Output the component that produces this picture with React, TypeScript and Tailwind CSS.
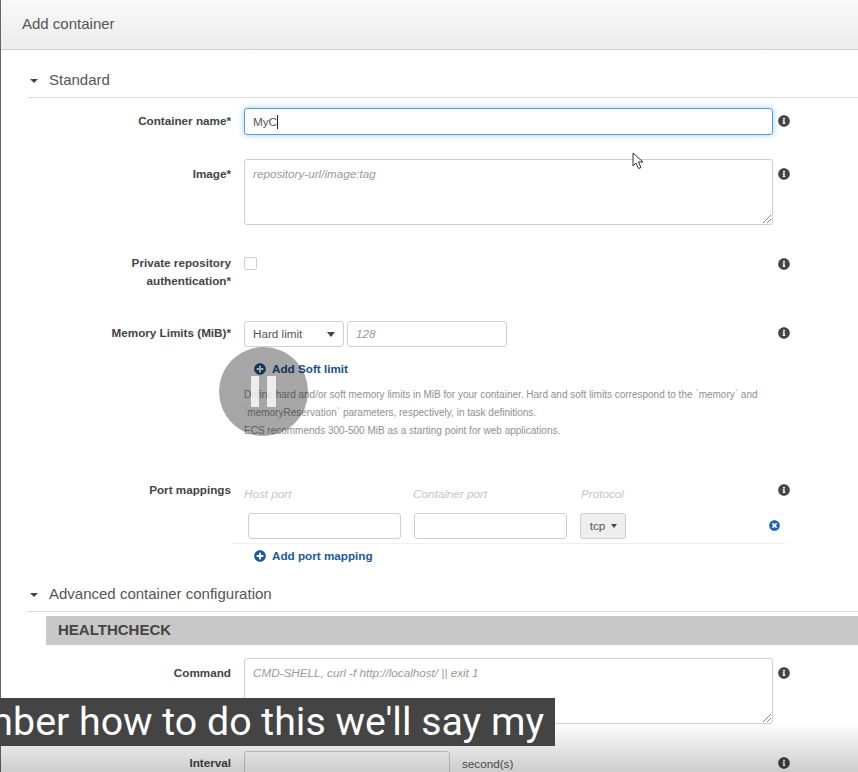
import type { ReactNode } from 'react';
import { FaInfoCircle, FaPlusCircle, FaTimesCircle } from 'react-icons/fa';

const fieldClass = 'rounded-[3px] border border-[#cfcfcf] bg-white';

function SectionHead({ title }: { title: string }) {
  return (
    <div className="ml-[27px] flex items-center border-b border-[#dcdcdc] pb-[6px]">
      <span className="ml-[3px] flex w-[19px] items-center pt-[2px]">
        <span className="inline-block h-0 w-0 border-x-[4px] border-t-[4px] border-x-transparent border-t-[#444]" />
      </span>
      <span className="text-[15px] leading-[22px] text-[#555]">{title}</span>
    </div>
  );
}

function Row({ label, labelClass, infoClass, children }: { label: ReactNode; labelClass: string; infoClass: string; children: ReactNode }) {
  return (
    <div className="flex items-start">
      <div className={`w-[231px] shrink-0 text-right text-[11.7px] leading-[18px] font-bold text-[#444] ${labelClass}`}>{label}</div>
      <div className="ml-[13px] w-[529px] shrink-0">{children}</div>
      <FaInfoCircle className={`ml-[5px] shrink-0 text-[12px] text-[#444] ${infoClass}`} />
    </div>
  );
}

function TextArea({ placeholder }: { placeholder: string }) {
  return (
    <div className={`relative h-[66px] px-[8px] py-[5px] text-[11.7px] leading-[18px] text-[#999] italic ${fieldClass}`}>
      {placeholder}
      <svg className="absolute right-0 bottom-0" width="10" height="10" viewBox="0 0 10 10" fill="none" stroke="#888">
        <path d="M1 9 9 1M5 9 9 5" />
      </svg>
    </div>
  );
}

function AddLink({ label, className }: { label: string; className: string }) {
  return (
    <div className={`flex items-center gap-[6px] text-[11.7px] leading-[18px] font-bold ${className}`}>
      <FaPlusCircle className="text-[12px]" />
      {label}
    </div>
  );
}

export default function App() {
  return (
    <div className="relative h-[772px] overflow-hidden bg-white font-['Liberation_Sans',Arial,sans-serif]">
      <div className="border-l border-[#666]">
        <div className="flex h-[50px] items-center border-b border-[#cfcfcf] bg-gradient-to-b from-[#f9f9f9] to-[#ececec] pl-[21px] text-[15px] text-[#555]">
          Add container
        </div>

        <div className="-ml-px pt-[19px]">
          <SectionHead title="Standard" />
        </div>

        <div className="-ml-px pt-[10px]">
          <Row label="Container name*" labelClass="pt-[4px]" infoClass="mt-[7px]">
            <div className="flex h-[27px] items-center rounded-[3px] border border-[#5b9bd1] bg-white px-[8px] text-[11.7px] text-[#555] shadow-[0_0_6px_rgba(102,175,233,0.6)]">
              MyC<span className="h-[14px] w-px bg-[#222]" />
            </div>
          </Row>

          <div className="mt-[24px]">
            <Row label="Image*" labelClass="pt-[6px]" infoClass="mt-[9px]">
              <TextArea placeholder="repository-url/image:tag" />
            </Row>
          </div>

          <div className="mt-[29px]">
            <Row label={<>Private repository<br />authentication*</>} labelClass="" infoClass="mt-[4px]">
              <div className="mt-[3px] h-[13px] w-[13px] rounded-[2px] border border-[#cfcfcf]" />
            </Row>
          </div>

          <div className="mt-[31px]">
            <Row label="Memory Limits (MiB)*" labelClass="pt-[3px]" infoClass="mt-[6px]">
              <div className="flex gap-[3px]">
                <div className={`flex h-[26px] w-[100px] items-center justify-between pr-[8px] pl-[8px] text-[11.7px] text-[#555] ${fieldClass}`}>
                  Hard limit
                  <span className="inline-block h-0 w-0 border-x-[4px] border-t-[5px] border-x-transparent border-t-[#444]" />
                </div>
                <div className={`flex h-[26px] w-[160px] items-center px-[8px] text-[11.7px] text-[#999] italic ${fieldClass}`}>128</div>
              </div>
              <AddLink label="Add Soft limit" className="mt-[13px] ml-[10px] text-[#1b4f8a]" />
              <div className="mt-[8px] text-[10px] leading-[18px] text-[#8f8f8f]">
                <p>Define hard and/or soft memory limits in MiB for your container. Hard and soft limits correspond to the `memory` and</p>
                <p>`memoryReservation` parameters, respectively, in task definitions.</p>
                <p>ECS recommends 300-500 MiB as a starting point for web applications.</p>
              </div>
            </Row>
          </div>

          <div className="mt-[40px]">
            <div className="flex items-start">
              <div className="w-[231px] shrink-0 pt-px text-right text-[11.7px] leading-[18px] font-bold text-[#444]">Port mappings</div>
              <div className="ml-px w-[553px] shrink-0">
                <div className="border-b border-[#eeeeee] pb-[4px] pl-[16px]">
                  <div className="flex h-[33px] pt-[5px] text-[11.7px] leading-[18px] text-[#c4c4c4] italic">
                    <span className="-ml-[4px] w-[169px]">Host port</span>
                    <span className="w-[168px]">Container port</span>
                    <span>Protocol</span>
                  </div>
                  <div className="flex items-center gap-[13px]">
                    <div className={`h-[26px] w-[153px] ${fieldClass}`} />
                    <div className={`h-[26px] w-[153px] ${fieldClass}`} />
                    <div className="flex h-[26px] w-[46px] items-center justify-center gap-[6px] rounded-[3px] border border-[#cfcfcf] bg-[#eeeeee] pl-px text-[11.7px] text-[#555]">
                      tcp
                      <span className="inline-block h-0 w-0 border-x-[3px] border-t-[4px] border-x-transparent border-t-[#444]" />
                    </div>
                    <FaTimesCircle className="mr-[5px] ml-auto -translate-y-px text-[11px] text-[#1b66b0]" />
                  </div>
                </div>
                <AddLink label="Add port mapping" className="mt-[3px] ml-[22px] text-[#1b5a9a]" />
              </div>
              <FaInfoCircle className="mt-[4px] -ml-[7px] shrink-0 text-[12px] text-[#444]" />
            </div>
          </div>
        </div>

        <div className="-ml-px pt-[18px]">
          <SectionHead title="Advanced container configuration" />
          <div className="mt-[4px] ml-[46px] flex h-[29px] items-center bg-[#c8c8c8] pl-[12px] text-[15px] font-bold text-[#444]">HEALTHCHECK</div>
          <div className="mt-[13px]">
            <Row label="Command" labelClass="pt-[6px]" infoClass="mt-[9px]">
              <TextArea placeholder="CMD-SHELL, curl -f http://localhost/ || exit 1" />
            </Row>
          </div>
          <div className="mt-[27px]">
            <Row label="Interval" labelClass="pt-[3px]" infoClass="mt-[6px]">
              <div className="flex items-center gap-[12px] text-[11.7px] text-[#555]">
                <div className={`h-[26px] w-[206px] ${fieldClass}`} />
                second(s)
              </div>
            </Row>
          </div>
        </div>
      </div>

      {/* video player overlays */}
      <div className="pointer-events-none absolute inset-x-0 bottom-0 h-[50px] bg-gradient-to-b from-transparent to-black/20" />
      <div className="absolute top-[347px] left-[219px] flex h-[89px] w-[89px] items-center justify-center gap-[8px] rounded-full bg-black/35">
        <span className="h-[31px] w-[8px] bg-white/80" />
        <span className="h-[31px] w-[9px] bg-white/80" />
      </div>
      <svg className="absolute top-[152px] left-[632px]" width="13" height="18" viewBox="0 0 13 18" fill="#fff" stroke="#333" strokeWidth="1">
        <path d="M1 1v13l3-3 2.500 5.500 2.500-1L6.500 10H11z" />
      </svg>
      <div className="absolute top-[698px] left-0 flex h-[48px] w-[555px] items-center justify-end overflow-hidden bg-[#444] pr-[11px] font-['Roboto',sans-serif] text-[39.3px] whitespace-nowrap text-white">
        remember how to do this we'll say my
      </div>
    </div>
  );
}
